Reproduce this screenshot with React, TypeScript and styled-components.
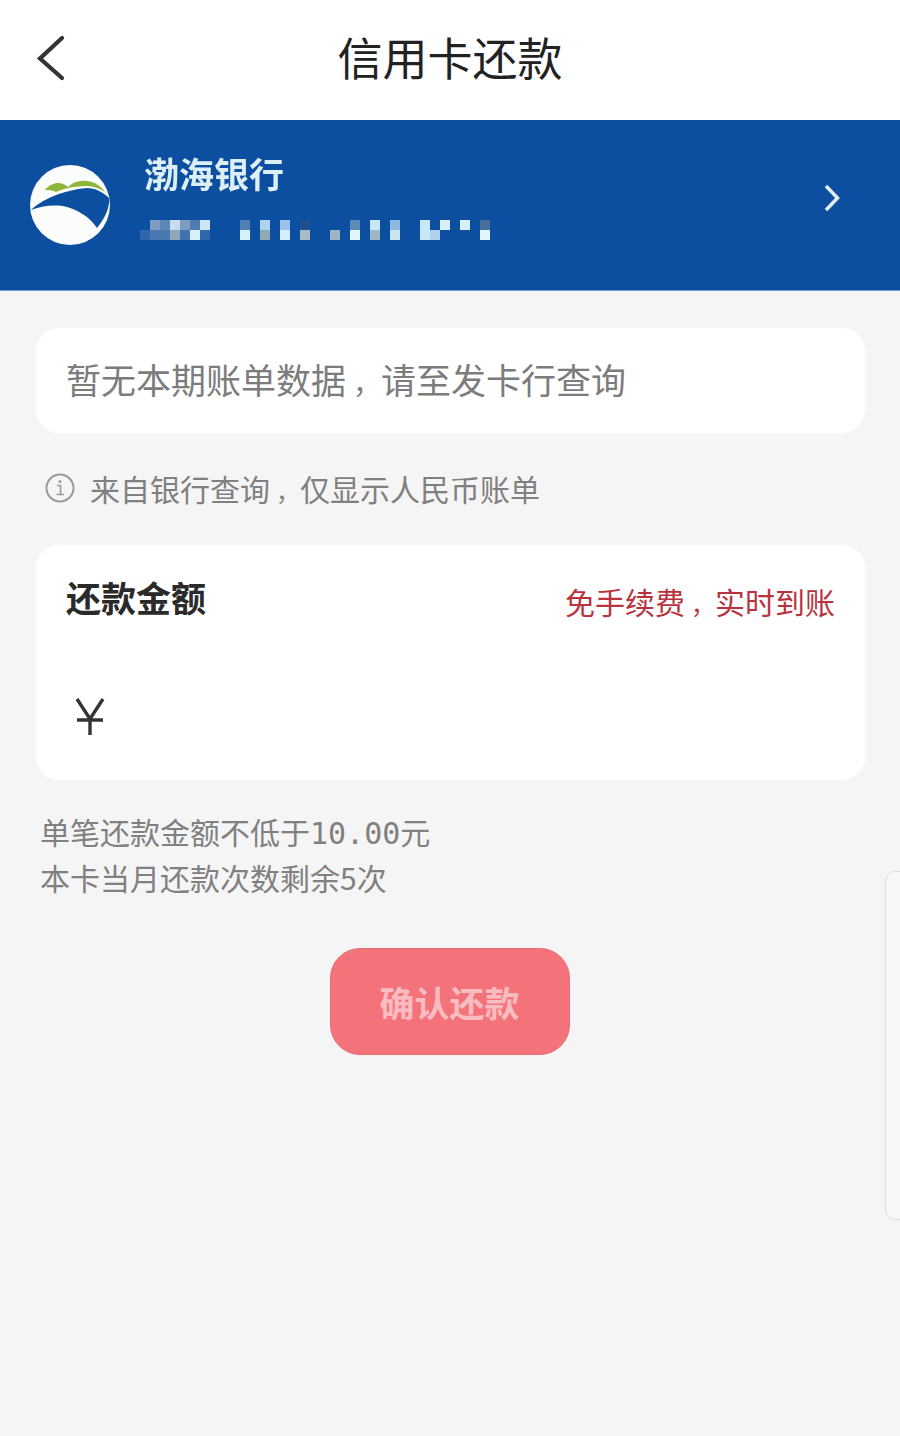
import React from "react";
import styled, { createGlobalStyle } from "styled-components";

const GlobalStyle = createGlobalStyle`
  html, body {
    margin: 0;
    padding: 0;
    background: #f6f5f5;
  }
  * {
    box-sizing: border-box;
  }
`;

const cjk = `"Noto Sans CJK SC", "Noto Sans", sans-serif`;

const Page = styled.div`
  position: relative;
  width: 900px;
  height: 1436px;
  overflow: hidden;
  background: #f6f5f5;
  font-family: ${cjk};
`;

const Header = styled.header`
  position: relative;
  height: 120px;
  display: flex;
  align-items: center;
  justify-content: center;
  padding-bottom: 6px;
  background: #fff;
`;

const BackButton = styled.svg`
  position: absolute;
  left: 34px;
  top: 34px;
`;

const Title = styled.h1`
  margin: 0;
  font-size: 45px;
  font-weight: 400;
  line-height: 60px;
  color: #222;
`;

const BankBar = styled.section`
  height: 171px;
  display: flex;
  align-items: center;
  padding: 0 59px 0 29px;
  background: #0c4fa1;
  border-bottom: 1px solid #6f9ac8;
`;

const BankText = styled.div`
  flex: 1;
  align-self: flex-start;
  margin: 28px 0 0 33px;
`;

const BankName = styled.div`
  font-size: 35px;
  font-weight: 700;
  line-height: 50px;
  color: #dceef6;
  filter: blur(0.5px);
`;

const Mosaic = styled.div`
  display: grid;
  grid-template-columns: repeat(35, 10px);
  grid-auto-rows: 10px;
  margin: 22px 0 0 -4px;
  filter: blur(0.4px);
`;

const MosaicCell = styled.span<{ $color: string }>`
  background: ${(props) => props.$color || "transparent"};
`;

const Chevron = styled.svg`
  margin-bottom: 14px;
`;

const Content = styled.main`
  display: flex;
  flex-direction: column;
  padding: 37px 35px 0 36px;
`;

const Card = styled.div`
  background: #fff;
  border-radius: 24px;
  box-shadow: 0 0 3px rgba(255, 255, 255, 0.9);
`;

const BillCard = styled(Card)`
  height: 105px;
  display: flex;
  align-items: center;
  padding: 0 30px 4px;
  font-size: 35px;
  color: #7c7c7c;
`;

// the reference sets the full-width comma towards the middle of its cell;
// the smaller size plus padding still adds up to one em of the parent
const Comma = styled.span`
  display: inline-block;
  font-size: 0.8em;
  padding-left: 0.25em;
`;

const Note = styled.div`
  display: flex;
  align-items: center;
  gap: 15px;
  height: 112px;
  padding: 0 0 2px 9px;
  font-size: 30px;
  color: #808080;
`;

const AmountCard = styled(Card)`
  height: 235px;
  padding: 27px 30px 0;
`;

const AmountHead = styled.div`
  display: flex;
  justify-content: space-between;
  align-items: flex-start;
`;

const AmountLabel = styled.div`
  font-size: 35px;
  font-weight: 700;
  line-height: 50px;
  color: #2a2a2a;
`;

const Free = styled.div`
  margin-top: 4px;
  font-size: 30px;
  line-height: 50px;
  color: #b8333d;
`;

const YenIcon = styled.svg`
  display: block;
  margin: 69px 0 0 9px;
`;

const Hints = styled.div`
  margin: 28px 0 0 4px;
`;

const HintLine = styled.div`
  height: 46px;
  font-size: 30px;
  line-height: 46px;
  color: #808080;
`;

const Digits = styled.span`
  font-family: "DejaVu Sans Mono", monospace;
`;

const ConfirmButton = styled.button`
  align-self: center;
  width: 240px;
  height: 107px;
  margin: 48px 2px 0 0;
  border: 1px solid #e47078;
  border-radius: 30px;
  background: #f4737b;
  font-family: ${cjk};
  font-size: 35px;
  font-weight: 700;
  color: #f9bcc0;
`;

const SideTab = styled.div`
  position: absolute;
  right: -10px;
  top: 871px;
  width: 25px;
  height: 349px;
  border: 1px solid #dcdcdc;
  border-radius: 10px;
  background: #f8f7f7;
`;

// blurred card number, one entry per 10px block, starts at x=140
const mosaicRows = [
  ["", "#7f9cc0", "#5f86b5", "#c9dcec", "#7f9cc0", "#4f7cb0", "#cfe4f5", "", "", "", "#4f80b5", "", "#b0d4ee", "", "#9cc4ea", "", "#1f4f90", "", "", "", "", "#5f8ab5", "", "#c8e8f8", "", "#8fb8e0", "", "", "#c8e8f8", "", "#d8f0fa", "", "#d8f0fa", "", "#4a6f9c"],
  ["#2f66ac", "#4a78b0", "#4a78b0", "#8fa8b8", "#3f72ae", "#d8f0fa", "#2f68ac", "", "", "", "#d5f2fb", "", "#90aab8", "", "#d5eefa", "", "#a8bcc8", "", "", "#a0b4c4", "", "#e0f6fc", "", "#a0b8c4", "", "#c8e4f0", "", "", "#c8e8f8", "#b0d0ec", "", "", "", "", "#e0f6fc"],
];

const BankLogo = () => (
  <svg width="82" height="82" viewBox="0 0 82 82" style={{ flexShrink: 0 }}>
    <circle cx="41" cy="41" r="40" fill="#fbfdfc" />
    <path d="M16 26 C20 21 25 19 29 19 C33 19 37 21 39 23 C44 18 51 16 58 17 C66 18 72 22 76 28 C70 24 64 22 58 22 C50 22 44 23 39 24 C34 25 30 27 27 28 C23 26 19 26 16 26 Z" fill="#8fb63c" />
    <path d="M2 46 C12 36 34 26 58 24 C66 24 74 28 80 34 C81 44 76 54 68 64 C60 52 48 46 38 43 C26 40 12 42 2 46 Z" fill="#0c4fa1" />
  </svg>
);

const App: React.FC = () => {
  return (
    <Page>
      <GlobalStyle />
      <Header>
        <BackButton width="36" height="50" viewBox="0 0 36 50">
          <path d="M28 4 L6 24.5 L28 44" fill="none" stroke="#333" strokeWidth="4.2" strokeLinecap="round" />
        </BackButton>
        <Title>信用卡还款</Title>
      </Header>

      <BankBar>
        <BankLogo />
        <BankText>
          <BankName>渤海银行</BankName>
          <Mosaic>
            {mosaicRows.flatMap((row, r) =>
              row.map((color, c) => <MosaicCell key={`${r}-${c}`} $color={color} />),
            )}
          </Mosaic>
        </BankText>
        <Chevron width="18" height="30" viewBox="0 0 18 30">
          <path d="M3 3 L14.5 15 L3 27" fill="none" stroke="#e4eef6" strokeWidth="3.5" />
        </Chevron>
      </BankBar>

      <Content>
        <BillCard>
          <span>
            暂无本期账单数据<Comma>，</Comma>请至发卡行查询
          </span>
        </BillCard>

        <Note>
          <svg width="30" height="30" viewBox="0 0 30 30" style={{ flexShrink: 0 }}>
            <circle cx="15" cy="15" r="13.5" fill="none" stroke="#9a9a9a" strokeWidth="2" />
            <circle cx="15" cy="8.5" r="1.5" fill="#9a9a9a" />
            <path d="M12 12.5 H15.5 V21.5 M11.5 21.5 H19" fill="none" stroke="#9a9a9a" strokeWidth="1.6" />
          </svg>
          <span>
            来自银行查询<Comma>，</Comma>仅显示人民币账单
          </span>
        </Note>

        <AmountCard>
          <AmountHead>
            <AmountLabel>还款金额</AmountLabel>
            <Free>
              免手续费<Comma>，</Comma>实时到账
            </Free>
          </AmountHead>
          <YenIcon width="30" height="38" viewBox="0 0 30 38">
            <path d="M2 1 L15 21 L28 1 M15 21 V37 M2 22 H28" fill="none" stroke="#333" strokeWidth="3.4" />
          </YenIcon>
        </AmountCard>

        <Hints>
          <HintLine>
            单笔还款金额不低于<Digits>10.00</Digits>元
          </HintLine>
          <HintLine>本卡当月还款次数剩余5次</HintLine>
        </Hints>

        <ConfirmButton>确认还款</ConfirmButton>
      </Content>

      <SideTab />
    </Page>
  );
};

export default App;
